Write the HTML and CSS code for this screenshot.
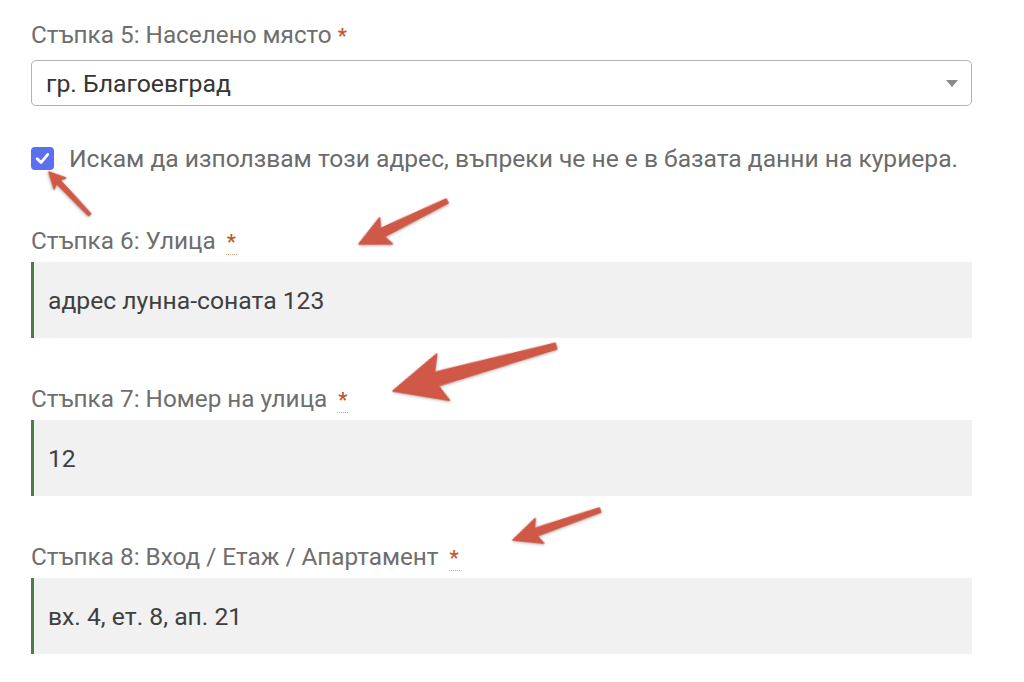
FILE: index.html
```html
<!DOCTYPE html>
<html lang="bg">
<head>
<meta charset="utf-8">
<title>Адрес за доставка</title>
<link rel="stylesheet" href="styles.css">
</head>
<body>
<div class="page">
  <form class="form">
    <div class="group group-first">
      <label class="label">Стъпка 5: Населено място <span class="req">*</span></label>
      <div class="select">
        <span class="select-value">гр. Благоевград</span>
        <span class="caret"></span>
      </div>
    </div>

    <label class="check">
      <span class="box">
        <svg viewBox="0 0 23 23" width="23" height="23"><path d="M6.2 11.8 L10 15.6 L16.8 7.4" fill="none" stroke="#fff" stroke-width="2.8" stroke-linecap="round" stroke-linejoin="round"/></svg>
      </span>
      <span class="check-text">Искам да използвам този адрес, въпреки че не е в базата данни на куриера.</span>
    </label>

    <div class="group group-street">
      <label class="label">Стъпка 6: Улица <abbr class="req req-line" title="задължително">*</abbr></label>
      <div class="input">адрес лунна-соната 123</div>
    </div>

    <div class="group">
      <label class="label">Стъпка 7: Номер на улица <abbr class="req req-line" title="задължително">*</abbr></label>
      <div class="input">12</div>
    </div>

    <div class="group">
      <label class="label">Стъпка 8: Вход / Етаж / Апартамент <abbr class="req req-line" title="задължително">*</abbr></label>
      <div class="input">вх. 4, ет. 8, ап. 21</div>
    </div>
  </form>

  <svg class="annotations" viewBox="0 0 1024 682" width="1024" height="682">
    <g class="arrow">
      <path transform="translate(49 172) rotate(46.4)" d="M0,0 L16,-8 L13.5,-2.4 L59,-1.4 L59,1.4 L13.5,2.4 L16,8 Z"/>
      <path transform="translate(359 244) rotate(-26)" d="M0,0 L30,-14.5 L26,-4.5 L98,-2.3 L98,2.3 L26,4.5 L30,14.5 Z"/>
      <path transform="translate(393 391) rotate(-15.4)" d="M0,0 L52,-24 L45,-7 L169,-3 L169,3 L45,7 L52,24 Z"/>
      <path transform="translate(513 540) rotate(-19)" d="M0,0 L28,-13 L24,-4 L92,-2.2 L92,2.2 L24,4 L28,13 Z"/>
    </g>
  </svg>
</div>
</body>
</html>
```

FILE: styles.css
```css
* {
  box-sizing: border-box;
}

html, body {
  margin: 0;
  padding: 0;
  background: #ffffff;
}

body {
  font-family: Roboto, "Noto Sans", "DejaVu Sans", sans-serif;
  color: #6b6b6b;
}

.page {
  position: relative;
  width: 1024px;
  height: 682px;
  overflow: hidden;
}

.form {
  padding: 21px 0 0 31px;
  width: 972px;
  display: flex;
  flex-direction: column;
}

.group {
  display: flex;
  flex-direction: column;
  margin-top: 47px;
}

.group-first {
  margin-top: 0;
}

.group-street {
  margin-top: 55px;
}

.label {
  font-size: 24.3px;
  line-height: 28px;
  height: 28px;
  color: #6e6e6e;
  white-space: nowrap;
}

.req {
  color: #bd5a2b;
  font-weight: 700;
  font-size: 20px;
  text-decoration: none;
}

.req-line {
  margin-left: 4px;
  border-bottom: 1px dotted #d9a083;
  padding: 0 1px;
}

.group-first .select {
  margin-top: 11px;
}

.select {
  height: 46px;
  border: 1px solid #b3b3b3;
  border-radius: 5px;
  background: #fff;
  display: flex;
  align-items: center;
  justify-content: space-between;
  padding: 0 13px 0 14px;
}

.select-value {
  font-size: 24.8px;
  color: #353535;
}

.caret {
  width: 0;
  height: 0;
  border-left: 6px solid transparent;
  border-right: 6px solid transparent;
  border-top: 7px solid #8a8a8a;
}

.check {
  display: flex;
  align-items: center;
  gap: 15px;
  height: 28px;
  margin-top: 38px;
}

.box {
  width: 23px;
  height: 23px;
  border-radius: 4px;
  background: #5a70ef;
  display: flex;
  align-items: center;
  justify-content: center;
  flex: none;
}

.box svg {
  display: block;
}

.check-text {
  font-size: 24.6px;
  color: #6b6b6b;
  white-space: nowrap;
}

.input {
  margin-top: 7px;
  height: 76px;
  background: #f1f1f1;
  border-left: 3px solid #4c7d48;
  padding-left: 14px;
  display: flex;
  align-items: center;
  font-size: 24.7px;
  color: #3f3f3f;
}

.annotations {
  position: absolute;
  top: 0;
  left: 0;
  pointer-events: none;
}

.arrow path {
  fill: #d05846;
  stroke: #d05846;
  stroke-width: 1.5;
  stroke-linejoin: round;
  filter: drop-shadow(0 1px 1.5px rgba(0, 0, 0, 0.28));
}
```
